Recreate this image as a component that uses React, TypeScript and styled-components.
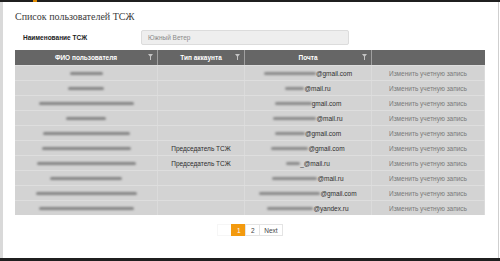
import styled, { createGlobalStyle } from 'styled-components';

const GlobalStyle = createGlobalStyle`
    html, body {
        margin: 0;
        padding: 0;
        background: #ffffff;
    }
    body {
        font-family: 'Liberation Sans', Arial, sans-serif;
    }
`;

const Page = styled.div`
    width: 500px;
    height: 261px;
    display: flex;
    flex-direction: column;
    overflow: hidden;
`;

const TopBar = styled.div`
    height: 2px;
    flex: none;
    background: #1f1f1f;
    display: flex;
    padding-left: 33px;
`;

const TopAccent = styled.div`
    width: 4px;
    background: #e08a00;
`;

const BottomBar = styled.div`
    height: 3px;
    flex: none;
    background: #1f1f1f;
`;

const Content = styled.div`
    flex: 1;
    border-left: 3px solid #d9d9d9;
    border-right: 1px solid #cfcfcf;
    margin-right: 1px;
    padding: 9px 12px 0 12px;
    display: flex;
    flex-direction: column;
`;

const Title = styled.h1`
    margin: 0;
    font-family: 'Liberation Serif', 'Times New Roman', serif;
    font-weight: normal;
    font-size: 10px;
    line-height: 12px;
    color: #3a3a3a;
`;

const FormRow = styled.div`
    display: grid;
    grid-template-columns: 118px 208px;
    align-items: center;
    margin-top: 7px;
    padding-left: 8px;
`;

const Label = styled.label`
    font-size: 6.5px;
    font-weight: bold;
    color: #222;
`;

const Field = styled.div`
    height: 15px;
    box-sizing: border-box;
    background: #eeeeee;
    border: 1px solid #dcdcdc;
    border-radius: 2px;
    padding-left: 6px;
    display: flex;
    align-items: center;
    font-size: 6.5px;
    color: #8a8a8a;
`;

const COLS = '143px 87px 127px 113px';

const Table = styled.div`
    margin-top: 5px;
    width: 470px;
`;

const HeadRow = styled.div`
    display: grid;
    grid-template-columns: ${COLS};
    height: 15px;
    background: #666666;
`;

const HeadCell = styled.div<{ $last?: boolean }>`
    position: relative;
    display: flex;
    align-items: center;
    justify-content: center;
    font-size: 6.5px;
    font-weight: bold;
    color: #ffffff;
    border-right: ${(p) => (p.$last ? 'none' : '1px solid #a0a0a0')};
`;

const Funnel = styled.svg`
    position: absolute;
    right: 4px;
    top: 4px;
`;

const Row = styled.div`
    display: grid;
    grid-template-columns: ${COLS};
    height: 15px;
    box-sizing: border-box;
    background: #d3d3d3;
    border-top: 1px solid #dedede;
`;

const Cell = styled.div<{ $muted?: boolean }>`
    display: flex;
    align-items: center;
    justify-content: center;
    font-size: 6.5px;
    color: ${(p) => (p.$muted ? '#7a7a7a' : '#2e2e2e')};
    border-right: 1px solid #dbdbdb;
    white-space: nowrap;
`;

const Blur = styled.span<{ $w: number; $tone?: string }>`
    display: inline-block;
    width: ${(p) => p.$w}px;
    height: 3px;
    border-radius: 2px;
    background: ${(p) => p.$tone || '#858585'};
    filter: blur(0.8px);
`;

const Pager = styled.nav`
    display: flex;
    justify-content: center;
    margin-top: 9px;
`;

const PageBtn = styled.span<{ $active?: boolean; $ghost?: boolean }>`
    height: 12px;
    min-width: 15px;
    box-sizing: border-box;
    padding: 0 4px;
    display: flex;
    align-items: center;
    justify-content: center;
    font-size: 6.5px;
    color: ${(p) => (p.$active ? '#ffffff' : '#444')};
    background: ${(p) => (p.$active ? '#f39a0e' : '#ffffff')};
    border: 1px solid ${(p) => (p.$active ? '#f39a0e' : p.$ghost ? '#f6f6f6' : '#e4e4e4')};
    margin-left: -1px;
`;

const FilterIcon = () => (
    <Funnel width="5" height="6" viewBox="0 0 5 6">
        <path d="M0 0 H5 L3 2.6 V6 H2 V2.6 Z" fill="#c4c4c4" />
    </Funnel>
);

type User = { name: number; role?: string; mailBlur: number; domain: string };

const users: User[] = [
    { name: 33, mailBlur: 52, domain: '@gmail.com' },
    { name: 36, mailBlur: 19, domain: '@mail.ru' },
    { name: 95, mailBlur: 37, domain: 'gmail.com' },
    { name: 40, mailBlur: 43, domain: '@mail.ru' },
    { name: 87, mailBlur: 30, domain: '@gmail.com' },
    { name: 89, role: 'Председатель ТСЖ', mailBlur: 37, domain: '@gmail.com' },
    { name: 99, role: 'Председатель ТСЖ', mailBlur: 14, domain: '_@mail.ru' },
    { name: 72, mailBlur: 45, domain: '@mail.ru' },
    { name: 101, mailBlur: 61, domain: '@gmail.com' },
    { name: 95, mailBlur: 46, domain: '@yandex.ru' },
];

export default function App() {
    return (
        <Page>
            <GlobalStyle />
            <TopBar>
                <TopAccent />
            </TopBar>
            <Content>
                <Title>Список пользователей ТСЖ</Title>
                <FormRow>
                    <Label>Наименование ТСЖ</Label>
                    <Field>Южный Ветер</Field>
                </FormRow>
                <Table>
                    <HeadRow>
                        <HeadCell>
                            ФИО пользователя
                            <FilterIcon />
                        </HeadCell>
                        <HeadCell>
                            Тип аккаунта
                            <FilterIcon />
                        </HeadCell>
                        <HeadCell>
                            Почта
                            <FilterIcon />
                        </HeadCell>
                        <HeadCell $last />
                    </HeadRow>
                    {users.map((u, i) => (
                        <Row key={i}>
                            <Cell>
                                <Blur $w={u.name} />
                            </Cell>
                            <Cell>{u.role}</Cell>
                            <Cell>
                                <Blur $w={u.mailBlur} $tone="#8a8a8a" />
                                {u.domain}
                            </Cell>
                            <Cell $muted>Изменить учетную запись</Cell>
                        </Row>
                    ))}
                </Table>
                <Pager>
                    <PageBtn $ghost />
                    <PageBtn $active>1</PageBtn>
                    <PageBtn>2</PageBtn>
                    <PageBtn>Next</PageBtn>
                </Pager>
            </Content>
            <BottomBar />
        </Page>
    );
}
